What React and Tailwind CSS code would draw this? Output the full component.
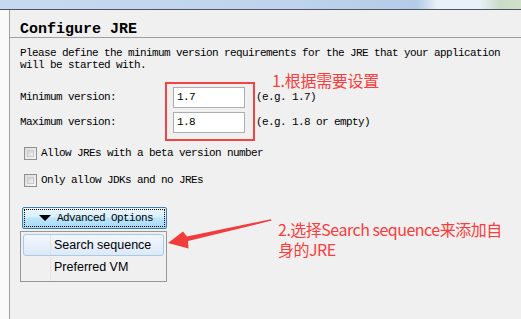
import React from "react";

const mono = "font-['Liberation_Mono','DejaVu_Sans_Mono',monospace] text-[11px] tracking-[-0.6px] text-black";

function Checkbox({ label }) {
  return (
    <div className="flex h-[13px] items-center gap-[4px]">
      <span className="h-[13px] w-[13px] border border-[#8e8f8f] bg-[linear-gradient(135deg,#dcdcdc,#f6f6f6)] p-[2px]">
        <span className="block h-full w-full border border-[#c9c9c9] bg-[linear-gradient(135deg,#d2d2d2,#f2f2f2)]" />
      </span>
      <span className={`${mono} leading-[13px]`}>{label}</span>
    </div>
  );
}

function MenuItem({ label, active }) {
  return (
    <div
      className={`flex h-[22px] items-stretch rounded-[3px] border ${
        active
          ? "border-[#a8c8ec] bg-[linear-gradient(#f2f7fd,#dde9f7)]"
          : "border-transparent"
      }`}
    >
      <span className="w-[27px] border-r border-[#e2e3e3]" />
      <span className="flex items-center pl-[3px] font-['Liberation_Sans',Arial,sans-serif] text-[12.5px] text-black">
        {label}
      </span>
    </div>
  );
}

export default function App() {
  return (
    <div className="relative flex h-[319px] w-[521px] flex-col overflow-hidden bg-[#f0f0f0]">
      {/* window chrome strip */}
      <div className="h-[9px] bg-[linear-gradient(to_right,#c6daef_0%,#bed4ec_55%,#b4cce8_80%,#e8f0f9_84%,#e8f0f9_92%,#cadcc8_96%,#d0e0ca_100%)]" />
      <div className="h-px bg-[#4c5560]" />

      <div className="flex flex-1">
        <div className="w-[10px] border-r border-[#a0a0a0] bg-[#fafafa]" />

        <div className="flex flex-1 flex-col">
          <div className="h-[28px] border-b border-[#a0a0a0] pl-[10px] pt-[5px]">
            <span className="font-['Liberation_Mono',monospace] text-[15px] font-bold leading-[18px] text-black">
              Configure JRE
            </span>
          </div>

          <p className={`${mono} pl-[10px] pt-[9px] leading-[12px]`}>
            Please define the minimum version requirements for the JRE that your application
            <br />
            will be started with.
          </p>

          {/* version inputs */}
          <div className="mt-[11px] flex items-start">
            <div className="flex w-[155px] flex-col gap-[4px] pl-[10px] pt-[5px]">
              <span className={`${mono} flex h-[21px] items-center`}>Minimum version:</span>
              <span className={`${mono} flex h-[21px] items-center`}>Maximum version:</span>
            </div>
            <div className="flex h-[59px] w-[90px] flex-col gap-[4px] border-2 border-[#f24444] pl-[6px] pt-[3px]">
              <div className={`${mono} flex h-[21px] w-[72px] items-center border border-[#abadb3] bg-white pl-[3px]`}>1.7</div>
              <div className={`${mono} flex h-[21px] w-[72px] items-center border border-[#abadb3] bg-white pl-[3px]`}>1.8</div>
            </div>
            <div className="ml-[1px] flex flex-col gap-[4px] pt-[5px]">
              <span className={`${mono} flex h-[21px] items-center`}>(e.g. 1.7)</span>
              <span className={`${mono} flex h-[21px] items-center`}>(e.g. 1.8 or empty)</span>
            </div>
          </div>

          <div className="mt-[6px] flex flex-col gap-[14px] pl-[14px]">
            <Checkbox label="Allow JREs with a beta version number" />
            <Checkbox label="Only allow JDKs and no JREs" />
          </div>

          {/* advanced options */}
          <div className="ml-[12px] mt-[20px] h-[22px] w-[145px] rounded-[2px] border border-[#3c7fb1] bg-[linear-gradient(#eaf6fd_0%,#d9f0fc_45%,#bee6fd_50%,#a7d9f5_100%)] p-[1px]">
            <div className="flex h-full items-center border border-dotted border-black pl-[14px]">
              <svg width="12" height="6" viewBox="0 0 12 6" className="mr-[6px]">
                <polygon points="0,0 12,0 6,6" fill="#000" />
              </svg>
              <span className={`${mono} leading-[12px]`}>Advanced Options</span>
            </div>
          </div>

          <div className="ml-[10px] mt-[2px] flex h-[51px] w-[147px] flex-col border border-[#979797] bg-[#f0f0f0] px-[2px] pt-[2px]">
            <MenuItem label="Search sequence" active />
            <MenuItem label="Preferred VM" />
            <div className="flex flex-1">
              <span className="ml-[1px] w-[27px] border-r border-[#e2e3e3]" />
            </div>
          </div>
        </div>
      </div>

      {/* annotations */}
      <div className="absolute left-[272px] top-[70px] font-['Noto_Sans_CJK_SC','Noto_Sans',sans-serif] text-[16px] leading-[20px] tracking-[-0.3px] text-[#fa3c3c]">
        1.根据需要设置
      </div>
      <div className="absolute left-[278px] top-[219px] flex flex-col font-['Noto_Sans_CJK_SC','Noto_Sans',sans-serif] text-[16px] leading-[20px] tracking-[-0.5px] text-[#fa3c3c]">
        <span className="h-[20px]">2.选择Search sequence来添加自</span>
        <span className="h-[20px]">身的JRE</span>
      </div>
      <svg className="absolute left-0 top-0" width="521" height="319" viewBox="0 0 521 319">
        <polygon
          points="271,219.3 187,236.5 183,231.5 168,243 188.5,248.5 188,241 271.5,220.6"
          fill="#f23b3b"
        />
      </svg>
    </div>
  );
}
